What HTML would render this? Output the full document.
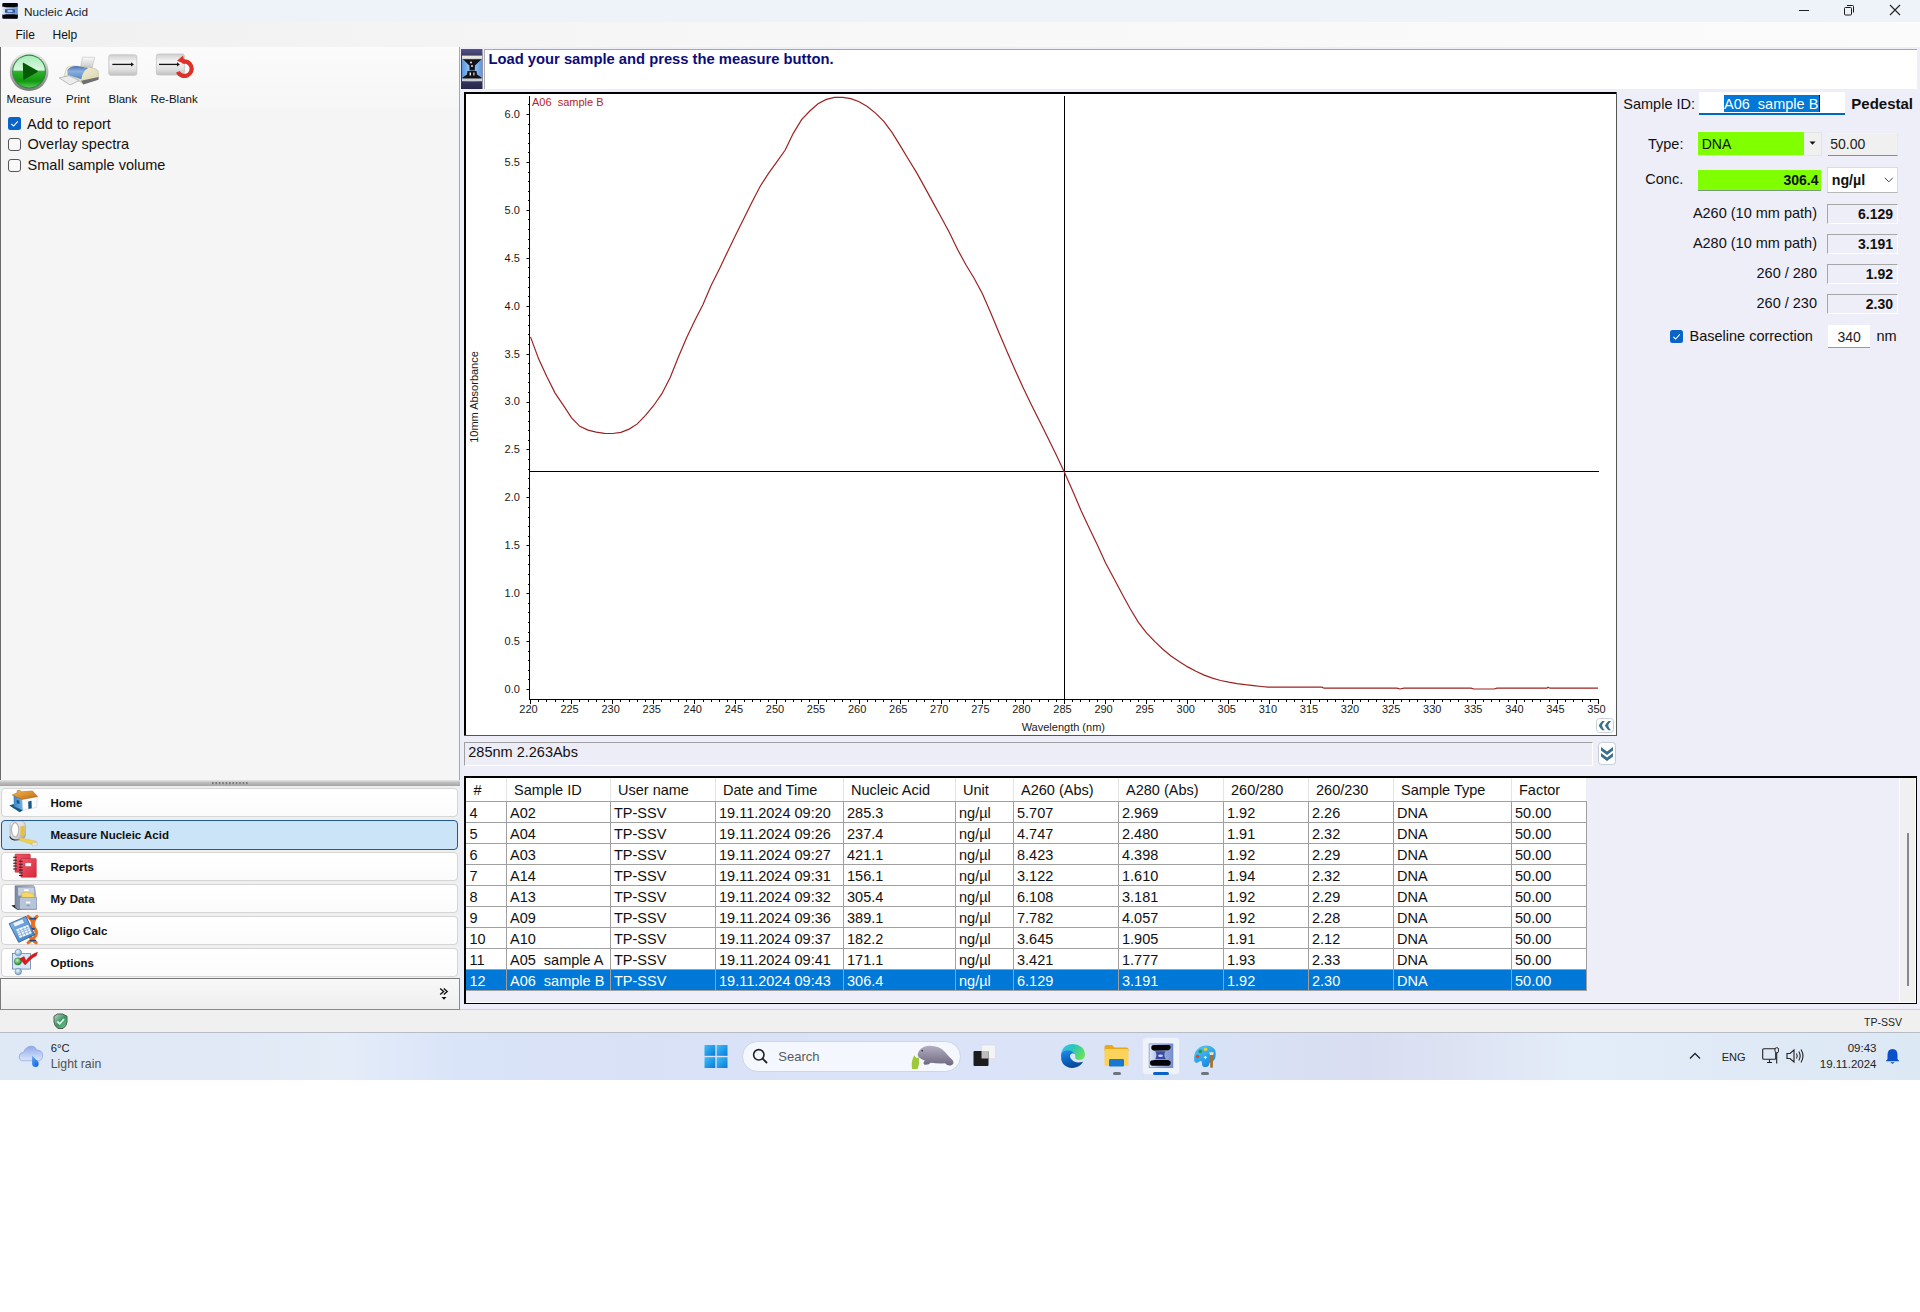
<!DOCTYPE html>
<html><head><meta charset="utf-8"><title>Nucleic Acid</title>
<style>
html,body{margin:0;padding:0;}
body{width:1920px;height:1312px;position:relative;overflow:hidden;background:#fff;font-family:'Liberation Sans',sans-serif;}
.t{position:absolute;line-height:1;white-space:nowrap;}
svg{overflow:visible}
</style></head><body>
<div style="position:absolute;left:0px;top:0px;width:1920px;height:22px;background:#eef2f9"></div>
<svg style="position:absolute;left:2px;top:3px;" width="16" height="16" viewBox="0 0 16 16"><defs><linearGradient id="ti" x1="0" y1="0" x2="1" y2="0"><stop offset="0" stop-color="#dce8f8"/><stop offset="1" stop-color="#6a90c8"/></linearGradient></defs>
<rect x="0.3" y="0" width="15.5" height="15.8" rx="1" fill="url(#ti)"/>
<path d="M0.3 1 Q0.3 0 1.5 0 L14.5 0 Q15.8 0 15.8 1 L15.8 3.8 Q13 3.6 12 4.2 L4 4.2 Q3 3.6 0.3 3.8 Z" fill="#050508"/>
<path d="M0.3 15 Q0.3 15.8 1.5 15.8 L14.5 15.8 Q15.8 15.8 15.8 15 L15.8 11.6 Q13 11.8 12 11.3 L4 11.3 Q3 11.8 0.3 11.6 Z" fill="#050508"/>
<rect x="3" y="6.2" width="10" height="3.6" fill="#2c5aa8"/><rect x="5.5" y="7.1" width="5" height="1.8" fill="#b8d0f0"/></svg>
<div class="t" style="left:24px;top:6.05px;font-size:11.75px;font-weight:normal;color:#1a1a1a;">Nucleic Acid</div>
<div style="position:absolute;left:1799px;top:10px;width:10px;height:1px;background:#222"></div>
<svg style="position:absolute;left:1843px;top:4px;" width="12" height="12" viewBox="0 0 12 12"><rect x="1.5" y="3.5" width="7" height="7.5" rx="1" fill="none" stroke="#1a1a1a" stroke-width="1"/><path d="M4 1.5 H9.5 Q10.5 1.5 10.5 2.5 V8.5" fill="none" stroke="#1a1a1a" stroke-width="1"/></svg>
<svg style="position:absolute;left:1889px;top:4px;" width="12" height="12" viewBox="0 0 12 12"><path d="M1 1 L11 11 M11 1 L1 11" stroke="#222" stroke-width="1.1"/></svg>
<div style="position:absolute;left:0px;top:22px;width:1920px;height:25px;background:linear-gradient(90deg,#f0f0f0 0%,#f7f7f7 40%,#fbfbfb 100%)"></div>
<div class="t" style="left:15.5px;top:28.59px;font-size:12px;font-weight:normal;color:#111;">File</div>
<div class="t" style="left:52.5px;top:28.59px;font-size:12px;font-weight:normal;color:#111;">Help</div>
<div style="position:absolute;left:460px;top:47px;width:1460px;height:962px;background:#eeeef9"></div>
<div style="position:absolute;left:0px;top:47px;width:460px;height:733px;background:#f5f5f5"></div>
<div style="position:absolute;left:0px;top:47px;width:459px;height:61px;background:linear-gradient(180deg,#fbfbfb,#f6f6f6)"></div>
<div style="position:absolute;left:0px;top:47px;width:1px;height:733px;background:#6a6a6a"></div>
<div style="position:absolute;left:459px;top:47px;width:1px;height:733px;background:#a8a8a8"></div>
<svg style="position:absolute;left:5px;top:48px" width="100" height="44" viewBox="0 0 1920 845">
<defs>
<linearGradient id="mring" x1="0" y1="0" x2="0" y2="1"><stop offset="0" stop-color="#f0f0f0"/><stop offset="1" stop-color="#7a7a7a"/></linearGradient>
<linearGradient id="mg" x1="0" y1="0" x2="0" y2="1"><stop offset="0" stop-color="#a8ecb8"/><stop offset="0.45" stop-color="#d8f8e0"/><stop offset="0.5" stop-color="#30b030"/><stop offset="0.8" stop-color="#109810"/><stop offset="1" stop-color="#58c858"/></linearGradient>
<linearGradient id="pblue" x1="0" y1="0" x2="0" y2="1"><stop offset="0" stop-color="#4a6ea8"/><stop offset="0.4" stop-color="#8ab0e0"/><stop offset="1" stop-color="#5a88c0"/></linearGradient>
<linearGradient id="pcream" x1="0" y1="0" x2="1" y2="1"><stop offset="0" stop-color="#fbf8e4"/><stop offset="1" stop-color="#d8d2a8"/></linearGradient>
<linearGradient id="ppaper" x1="0" y1="0" x2="0" y2="1"><stop offset="0" stop-color="#fafafa"/><stop offset="1" stop-color="#c8c8c8"/></linearGradient>
</defs>
<circle cx="462" cy="455" r="372" fill="url(#mring)"/>
<circle cx="462" cy="452" r="325" fill="#2a8a3a"/>
<circle cx="462" cy="452" r="305" fill="url(#mg)"/>
<path d="M355 285 Q340 280 342 300 L352 595 Q355 615 372 605 L625 460 Q642 448 625 438 Z" fill="#055a05"/>
<path d="M1490 175 L1722 180 L1672 385 L1450 372 Z" fill="url(#ppaper)" stroke="#b8b8b8" stroke-width="10"/>
<path d="M1140 510 L1190 380 Q1230 340 1330 345 L1620 370 Q1780 400 1790 450 L1795 590 L1505 690 L1430 640 L1140 540 Z" fill="url(#pcream)" stroke="#a8a488" stroke-width="8"/>
<path d="M1195 430 Q1230 350 1380 345 L1600 385 Q1490 440 1465 600 L1205 520 Z" fill="url(#pblue)"/>
<path d="M1460 630 L1795 555 L1795 610 L1505 700 Z" fill="#707070"/>
<path d="M1040 575 L1230 530 L1425 625 L1250 710 Z" fill="#ececec" stroke="#9a9a9a" stroke-width="12"/>
</svg>
<svg style="position:absolute;left:107px;top:54px;" width="32" height="24" viewBox="0 0 32 24"><defs><linearGradient id="bl" x1="0" y1="0" x2="0" y2="1"><stop offset="0" stop-color="#cfcfcf"/><stop offset="0.35" stop-color="#f4f4f4"/><stop offset="0.7" stop-color="#e2e2e2"/><stop offset="1" stop-color="#c0c0c0"/></linearGradient></defs>
<rect x="1.8" y="0.8" width="28" height="20.5" rx="2" fill="url(#bl)" stroke="#c4c4c4" stroke-width="0.8"/>
<path d="M5.3 10.4 H24.5" stroke="#151515" stroke-width="1.3"/><path d="M24 8.2 L27 10.4 L24 12.6 Z" fill="#151515"/></svg>
<svg style="position:absolute;left:150px;top:50px;" width="50" height="35" viewBox="0 0 50 35"><defs><linearGradient id="bl2" x1="0" y1="0" x2="0" y2="1"><stop offset="0" stop-color="#cfcfcf"/><stop offset="0.35" stop-color="#f4f4f4"/><stop offset="0.7" stop-color="#e2e2e2"/><stop offset="1" stop-color="#c0c0c0"/></linearGradient></defs>
<rect x="6.4" y="4" width="28" height="21" rx="2" fill="url(#bl2)" stroke="#c4c4c4" stroke-width="0.8"/>
<path d="M9 14.4 H27.5" stroke="#151515" stroke-width="1.3"/><path d="M27 12.2 L29.8 14.4 L27 16.6 Z" fill="#151515"/>
<path d="M31.9 11.8 A7.3 7.3 0 1 1 27.8 21.9" fill="none" stroke="#dc3228" stroke-width="4.2"/>
<path d="M27 10.8 L33 5.6 L35 14 Z" fill="#e0302a"/></svg>
<div class="t" style="left:6.6px;top:94.07px;font-size:11.5px;font-weight:normal;color:#111;">Measure</div>
<div class="t" style="left:66px;top:94.07px;font-size:11.5px;font-weight:normal;color:#111;">Print</div>
<div class="t" style="left:108.5px;top:94.07px;font-size:11.5px;font-weight:normal;color:#111;">Blank</div>
<div class="t" style="left:150.4px;top:94.07px;font-size:11.5px;font-weight:normal;color:#111;">Re-Blank</div>
<svg style="position:absolute;left:8px;top:117px;" width="13" height="13" viewBox="0 0 13 13"><rect x="0" y="0" width="13" height="13" rx="2.5" fill="#0a64c8"/><path d="M3.3 6.8 L5.6 9 L9.8 4.4" fill="none" stroke="#fff" stroke-width="1.1"/></svg>
<svg style="position:absolute;left:8px;top:138px;" width="13" height="13" viewBox="0 0 13 13"><rect x="0.5" y="0.5" width="12" height="12" rx="2.5" fill="#f8f8f8" stroke="#555" stroke-width="1"/></svg>
<svg style="position:absolute;left:8px;top:159px;" width="13" height="13" viewBox="0 0 13 13"><rect x="0.5" y="0.5" width="12" height="12" rx="2.5" fill="#f8f8f8" stroke="#555" stroke-width="1"/></svg>
<div class="t" style="left:27px;top:116.53px;font-size:14.5px;font-weight:normal;color:#111;">Add to report</div>
<div class="t" style="left:27.6px;top:136.93px;font-size:14.5px;font-weight:normal;color:#111;">Overlay spectra</div>
<div class="t" style="left:27.6px;top:158.03px;font-size:14.5px;font-weight:normal;color:#111;">Small sample volume</div>
<div style="position:absolute;left:0px;top:780px;width:460px;height:6px;background:linear-gradient(180deg,#e8e8e8 0%,#c0c0c0 40%,#a4a4a4 100%)"></div>
<svg style="position:absolute;left:212px;top:782px;" width="36" height="3" viewBox="0 0 36 3"><rect x="0.0" y="0" width="1.6" height="2.2" fill="#7a7a7a"/><rect x="3.4" y="0" width="1.6" height="2.2" fill="#7a7a7a"/><rect x="6.8" y="0" width="1.6" height="2.2" fill="#7a7a7a"/><rect x="10.2" y="0" width="1.6" height="2.2" fill="#7a7a7a"/><rect x="13.6" y="0" width="1.6" height="2.2" fill="#7a7a7a"/><rect x="17.0" y="0" width="1.6" height="2.2" fill="#7a7a7a"/><rect x="20.4" y="0" width="1.6" height="2.2" fill="#7a7a7a"/><rect x="23.8" y="0" width="1.6" height="2.2" fill="#7a7a7a"/><rect x="27.2" y="0" width="1.6" height="2.2" fill="#7a7a7a"/><rect x="30.6" y="0" width="1.6" height="2.2" fill="#7a7a7a"/><rect x="34.0" y="0" width="1.6" height="2.2" fill="#7a7a7a"/></svg>
<div style="position:absolute;left:0px;top:786px;width:460px;height:192px;background:#efefef"></div>
<div style="position:absolute;left:1px;top:788px;width:455px;height:27px;background:linear-gradient(180deg,#ffffff,#fbfbfb);border:1px solid #d6d6d6;border-radius:4px"></div>
<div class="t" style="left:50.5px;top:798.27px;font-size:11.5px;font-weight:bold;color:#111;">Home</div>
<div style="position:absolute;left:1px;top:819.5px;width:455px;height:28px;background:#cce4f7;border:1px solid #215a92;border-radius:4px"></div>
<div class="t" style="left:50.5px;top:830.27px;font-size:11.5px;font-weight:bold;color:#111;">Measure Nucleic Acid</div>
<div style="position:absolute;left:1px;top:852px;width:455px;height:27px;background:linear-gradient(180deg,#ffffff,#fbfbfb);border:1px solid #d6d6d6;border-radius:4px"></div>
<div class="t" style="left:50.5px;top:862.27px;font-size:11.5px;font-weight:bold;color:#111;">Reports</div>
<div style="position:absolute;left:1px;top:884px;width:455px;height:27px;background:linear-gradient(180deg,#ffffff,#fbfbfb);border:1px solid #d6d6d6;border-radius:4px"></div>
<div class="t" style="left:50.5px;top:894.27px;font-size:11.5px;font-weight:bold;color:#111;">My Data</div>
<div style="position:absolute;left:1px;top:916px;width:455px;height:27px;background:linear-gradient(180deg,#ffffff,#fbfbfb);border:1px solid #d6d6d6;border-radius:4px"></div>
<div class="t" style="left:50.5px;top:926.27px;font-size:11.5px;font-weight:bold;color:#111;">Oligo Calc</div>
<div style="position:absolute;left:1px;top:948px;width:455px;height:27px;background:linear-gradient(180deg,#ffffff,#fbfbfb);border:1px solid #d6d6d6;border-radius:4px"></div>
<div class="t" style="left:50.5px;top:958.27px;font-size:11.5px;font-weight:bold;color:#111;">Options</div>
<div style="position:absolute;left:0px;top:978px;width:460px;height:32px;background:linear-gradient(180deg,#f8f8f8,#efefef);border-top:1px solid #7a7a7a;border-bottom:1px solid #8a8a8a;border-left:1px solid #7a7a7a;border-right:1px solid #8a8a8a;box-sizing:border-box"></div>
<svg style="position:absolute;left:439px;top:987px;" width="12" height="15" viewBox="0 0 12 15"><path d="M1.2 1.5 L4.6 4.5 L1.2 7.5 M4.8 1.5 L8.2 4.5 L4.8 7.5" fill="none" stroke="#111" stroke-width="1.4"/><path d="M2.5 10 L7.5 10 L5 12.8 Z" fill="#111"/></svg>
<div style="position:absolute;left:0px;top:1010px;width:1920px;height:22px;background:#f0f0f0"></div>
<div style="position:absolute;left:460px;top:1009px;width:1460px;height:1px;background:#d0d0d8"></div>
<div style="position:absolute;left:0px;top:1032px;width:1920px;height:1px;background:#b8bcc4"></div>
<svg style="position:absolute;left:52px;top:1013px;" width="17" height="17" viewBox="0 0 17 17"><defs><linearGradient id="sh" x1="0" y1="0" x2="1" y2="1"><stop offset="0" stop-color="#c8d4d0"/><stop offset="0.5" stop-color="#3a9a60"/><stop offset="1" stop-color="#70c890"/></linearGradient></defs>
<path d="M5.5 1 L10.5 1 L15 3.2 L15 9 Q14.5 13 11 15.5 L6 15.5 Q2.5 13 2 9 L2 3.2 Z" fill="url(#sh)" stroke="#505858" stroke-width="1"/>
<path d="M5.3 8.5 L7.8 10.8 L12 6" fill="none" stroke="#d8fce8" stroke-width="1.8"/></svg>
<div class="t" style="right:18px;top:1017.11px;font-size:10.5px;font-weight:normal;color:#222;">TP-SSV</div>
<div style="position:absolute;left:0px;top:1033px;width:1920px;height:47px;background:linear-gradient(90deg,#dfe8f5 0%,#e1e9f6 12%,#e4ecf8 18%,#d9e4f8 24%,#d9e1f6 33%,#dae3f7 45%,#dbe3f7 55%,#d8e2f6 64%,#d9ddf1 71%,#dde3f3 76%,#e3ecf9 82%,#e0eaf7 90%,#dde8f5 100%)"></div>
<svg style="position:absolute;left:461px;top:49px;" width="22" height="40" viewBox="0 0 22 40"><defs><linearGradient id="hi" x1="0" y1="0" x2="0" y2="1"><stop offset="0" stop-color="#54548a"/><stop offset="0.16" stop-color="#3c3c68"/><stop offset="0.8" stop-color="#34345a"/><stop offset="1" stop-color="#26264a"/></linearGradient>
<linearGradient id="hb" x1="0" y1="0" x2="1" y2="0"><stop offset="0" stop-color="#5a98e0"/><stop offset="0.5" stop-color="#a8d0f4"/><stop offset="1" stop-color="#5a98e0"/></linearGradient></defs>
<rect x="0" y="0" width="21.5" height="40" fill="url(#hi)"/>
<rect x="1" y="9.4" width="20" height="23" fill="url(#hb)"/>
<rect x="1" y="6.6" width="20" height="3.2" fill="#ece8d8"/>
<path d="M2 10.2 L20.5 10.2 L14 16.5 L13.8 21.5 L8.6 21.5 L8.4 16.5 Z" fill="#141418"/>
<path d="M6.5 22 L15.5 22 L16 25.5 L20.5 28.5 L20.5 32 L1.5 32 L1.5 28.5 L6 25.5 Z" fill="#141418"/>
<rect x="1" y="29.5" width="20" height="2.5" fill="#e8eef4" opacity="0.85"/>
<circle cx="10" cy="13.5" r="0.9" fill="#fff"/><circle cx="11" cy="17" r="1" fill="#ddd"/>
<rect x="8.6" y="23.5" width="1.4" height="3" fill="#f0f0f0"/><rect x="12.3" y="23.5" width="1.2" height="3" fill="#d8d8d8"/></svg>
<div style="position:absolute;left:484px;top:49px;width:1433px;height:40px;background:#fff;border-top:1px solid #a8a8a8;border-left:1px solid #b0b0b0;box-sizing:border-box"></div>
<div class="t" style="left:488.5px;top:51.91px;font-size:14.75px;font-weight:bold;color:#0c0c78;">Load your sample and press the measure button.</div>
<div style="position:absolute;left:464px;top:92px;width:1153px;height:644px;background:#fff"></div>
<div style="position:absolute;left:464px;top:92px;width:1153px;height:2px;background:#000"></div>
<div style="position:absolute;left:464px;top:92px;width:2px;height:644px;background:#000"></div>
<div style="position:absolute;left:464px;top:735px;width:1153px;height:1px;background:#555"></div>
<div style="position:absolute;left:1616px;top:92px;width:1px;height:644px;background:#555"></div>
<svg style="position:absolute;left:464px;top:92px;overflow:hidden" width="1153" height="644" viewBox="0 0 1153 644"><g transform="translate(-464,-92)"><rect x="529" y="96" width="1" height="604" fill="#000"/><rect x="529" y="699" width="1070" height="1" fill="#000"/><rect x="526.5" y="689" width="2.5" height="1" fill="#000"/><rect x="528" y="679" width="1" height="1" fill="#000"/><rect x="528" y="670" width="1" height="1" fill="#000"/><rect x="528" y="660" width="1" height="1" fill="#000"/><rect x="528" y="651" width="1" height="1" fill="#000"/><rect x="526.5" y="641" width="2.5" height="1" fill="#000"/><rect x="528" y="632" width="1" height="1" fill="#000"/><rect x="528" y="622" width="1" height="1" fill="#000"/><rect x="528" y="612" width="1" height="1" fill="#000"/><rect x="528" y="603" width="1" height="1" fill="#000"/><rect x="526.5" y="593" width="2.5" height="1" fill="#000"/><rect x="528" y="584" width="1" height="1" fill="#000"/><rect x="528" y="574" width="1" height="1" fill="#000"/><rect x="528" y="564" width="1" height="1" fill="#000"/><rect x="528" y="555" width="1" height="1" fill="#000"/><rect x="526.5" y="545" width="2.5" height="1" fill="#000"/><rect x="528" y="536" width="1" height="1" fill="#000"/><rect x="528" y="526" width="1" height="1" fill="#000"/><rect x="528" y="517" width="1" height="1" fill="#000"/><rect x="528" y="507" width="1" height="1" fill="#000"/><rect x="526.5" y="497" width="2.5" height="1" fill="#000"/><rect x="528" y="488" width="1" height="1" fill="#000"/><rect x="528" y="478" width="1" height="1" fill="#000"/><rect x="528" y="469" width="1" height="1" fill="#000"/><rect x="528" y="459" width="1" height="1" fill="#000"/><rect x="526.5" y="449" width="2.5" height="1" fill="#000"/><rect x="528" y="440" width="1" height="1" fill="#000"/><rect x="528" y="430" width="1" height="1" fill="#000"/><rect x="528" y="421" width="1" height="1" fill="#000"/><rect x="528" y="411" width="1" height="1" fill="#000"/><rect x="526.5" y="402" width="2.5" height="1" fill="#000"/><rect x="528" y="392" width="1" height="1" fill="#000"/><rect x="528" y="382" width="1" height="1" fill="#000"/><rect x="528" y="373" width="1" height="1" fill="#000"/><rect x="528" y="363" width="1" height="1" fill="#000"/><rect x="526.5" y="354" width="2.5" height="1" fill="#000"/><rect x="528" y="344" width="1" height="1" fill="#000"/><rect x="528" y="334" width="1" height="1" fill="#000"/><rect x="528" y="325" width="1" height="1" fill="#000"/><rect x="528" y="315" width="1" height="1" fill="#000"/><rect x="526.5" y="306" width="2.5" height="1" fill="#000"/><rect x="528" y="296" width="1" height="1" fill="#000"/><rect x="528" y="287" width="1" height="1" fill="#000"/><rect x="528" y="277" width="1" height="1" fill="#000"/><rect x="528" y="267" width="1" height="1" fill="#000"/><rect x="526.5" y="258" width="2.5" height="1" fill="#000"/><rect x="528" y="248" width="1" height="1" fill="#000"/><rect x="528" y="239" width="1" height="1" fill="#000"/><rect x="528" y="229" width="1" height="1" fill="#000"/><rect x="528" y="219" width="1" height="1" fill="#000"/><rect x="526.5" y="210" width="2.5" height="1" fill="#000"/><rect x="528" y="200" width="1" height="1" fill="#000"/><rect x="528" y="191" width="1" height="1" fill="#000"/><rect x="528" y="181" width="1" height="1" fill="#000"/><rect x="528" y="172" width="1" height="1" fill="#000"/><rect x="526.5" y="162" width="2.5" height="1" fill="#000"/><rect x="528" y="152" width="1" height="1" fill="#000"/><rect x="528" y="143" width="1" height="1" fill="#000"/><rect x="528" y="133" width="1" height="1" fill="#000"/><rect x="528" y="124" width="1" height="1" fill="#000"/><rect x="526.5" y="114" width="2.5" height="1" fill="#000"/><rect x="528" y="104" width="1" height="1" fill="#000"/><rect x="530" y="700" width="1" height="4" fill="#000"/><rect x="538" y="700" width="1" height="2" fill="#000"/><rect x="546" y="700" width="1" height="2" fill="#000"/><rect x="555" y="700" width="1" height="2" fill="#000"/><rect x="563" y="700" width="1" height="2" fill="#000"/><rect x="571" y="700" width="1" height="4" fill="#000"/><rect x="579" y="700" width="1" height="2" fill="#000"/><rect x="588" y="700" width="1" height="2" fill="#000"/><rect x="596" y="700" width="1" height="2" fill="#000"/><rect x="604" y="700" width="1" height="2" fill="#000"/><rect x="612" y="700" width="1" height="4" fill="#000"/><rect x="620" y="700" width="1" height="2" fill="#000"/><rect x="629" y="700" width="1" height="2" fill="#000"/><rect x="637" y="700" width="1" height="2" fill="#000"/><rect x="645" y="700" width="1" height="2" fill="#000"/><rect x="653" y="700" width="1" height="4" fill="#000"/><rect x="661" y="700" width="1" height="2" fill="#000"/><rect x="670" y="700" width="1" height="2" fill="#000"/><rect x="678" y="700" width="1" height="2" fill="#000"/><rect x="686" y="700" width="1" height="2" fill="#000"/><rect x="694" y="700" width="1" height="4" fill="#000"/><rect x="703" y="700" width="1" height="2" fill="#000"/><rect x="711" y="700" width="1" height="2" fill="#000"/><rect x="719" y="700" width="1" height="2" fill="#000"/><rect x="727" y="700" width="1" height="2" fill="#000"/><rect x="735" y="700" width="1" height="4" fill="#000"/><rect x="744" y="700" width="1" height="2" fill="#000"/><rect x="752" y="700" width="1" height="2" fill="#000"/><rect x="760" y="700" width="1" height="2" fill="#000"/><rect x="768" y="700" width="1" height="2" fill="#000"/><rect x="776" y="700" width="1" height="4" fill="#000"/><rect x="785" y="700" width="1" height="2" fill="#000"/><rect x="793" y="700" width="1" height="2" fill="#000"/><rect x="801" y="700" width="1" height="2" fill="#000"/><rect x="809" y="700" width="1" height="2" fill="#000"/><rect x="818" y="700" width="1" height="4" fill="#000"/><rect x="826" y="700" width="1" height="2" fill="#000"/><rect x="834" y="700" width="1" height="2" fill="#000"/><rect x="842" y="700" width="1" height="2" fill="#000"/><rect x="850" y="700" width="1" height="2" fill="#000"/><rect x="859" y="700" width="1" height="4" fill="#000"/><rect x="867" y="700" width="1" height="2" fill="#000"/><rect x="875" y="700" width="1" height="2" fill="#000"/><rect x="883" y="700" width="1" height="2" fill="#000"/><rect x="891" y="700" width="1" height="2" fill="#000"/><rect x="900" y="700" width="1" height="4" fill="#000"/><rect x="908" y="700" width="1" height="2" fill="#000"/><rect x="916" y="700" width="1" height="2" fill="#000"/><rect x="924" y="700" width="1" height="2" fill="#000"/><rect x="933" y="700" width="1" height="2" fill="#000"/><rect x="941" y="700" width="1" height="4" fill="#000"/><rect x="949" y="700" width="1" height="2" fill="#000"/><rect x="957" y="700" width="1" height="2" fill="#000"/><rect x="965" y="700" width="1" height="2" fill="#000"/><rect x="974" y="700" width="1" height="2" fill="#000"/><rect x="982" y="700" width="1" height="4" fill="#000"/><rect x="990" y="700" width="1" height="2" fill="#000"/><rect x="998" y="700" width="1" height="2" fill="#000"/><rect x="1006" y="700" width="1" height="2" fill="#000"/><rect x="1015" y="700" width="1" height="2" fill="#000"/><rect x="1023" y="700" width="1" height="4" fill="#000"/><rect x="1031" y="700" width="1" height="2" fill="#000"/><rect x="1039" y="700" width="1" height="2" fill="#000"/><rect x="1048" y="700" width="1" height="2" fill="#000"/><rect x="1056" y="700" width="1" height="2" fill="#000"/><rect x="1064" y="700" width="1" height="4" fill="#000"/><rect x="1072" y="700" width="1" height="2" fill="#000"/><rect x="1080" y="700" width="1" height="2" fill="#000"/><rect x="1089" y="700" width="1" height="2" fill="#000"/><rect x="1097" y="700" width="1" height="2" fill="#000"/><rect x="1105" y="700" width="1" height="4" fill="#000"/><rect x="1113" y="700" width="1" height="2" fill="#000"/><rect x="1122" y="700" width="1" height="2" fill="#000"/><rect x="1130" y="700" width="1" height="2" fill="#000"/><rect x="1138" y="700" width="1" height="2" fill="#000"/><rect x="1146" y="700" width="1" height="4" fill="#000"/><rect x="1154" y="700" width="1" height="2" fill="#000"/><rect x="1163" y="700" width="1" height="2" fill="#000"/><rect x="1171" y="700" width="1" height="2" fill="#000"/><rect x="1179" y="700" width="1" height="2" fill="#000"/><rect x="1187" y="700" width="1" height="4" fill="#000"/><rect x="1195" y="700" width="1" height="2" fill="#000"/><rect x="1204" y="700" width="1" height="2" fill="#000"/><rect x="1212" y="700" width="1" height="2" fill="#000"/><rect x="1220" y="700" width="1" height="2" fill="#000"/><rect x="1228" y="700" width="1" height="4" fill="#000"/><rect x="1237" y="700" width="1" height="2" fill="#000"/><rect x="1245" y="700" width="1" height="2" fill="#000"/><rect x="1253" y="700" width="1" height="2" fill="#000"/><rect x="1261" y="700" width="1" height="2" fill="#000"/><rect x="1269" y="700" width="1" height="4" fill="#000"/><rect x="1278" y="700" width="1" height="2" fill="#000"/><rect x="1286" y="700" width="1" height="2" fill="#000"/><rect x="1294" y="700" width="1" height="2" fill="#000"/><rect x="1302" y="700" width="1" height="2" fill="#000"/><rect x="1310" y="700" width="1" height="4" fill="#000"/><rect x="1319" y="700" width="1" height="2" fill="#000"/><rect x="1327" y="700" width="1" height="2" fill="#000"/><rect x="1335" y="700" width="1" height="2" fill="#000"/><rect x="1343" y="700" width="1" height="2" fill="#000"/><rect x="1352" y="700" width="1" height="4" fill="#000"/><rect x="1360" y="700" width="1" height="2" fill="#000"/><rect x="1368" y="700" width="1" height="2" fill="#000"/><rect x="1376" y="700" width="1" height="2" fill="#000"/><rect x="1384" y="700" width="1" height="2" fill="#000"/><rect x="1393" y="700" width="1" height="4" fill="#000"/><rect x="1401" y="700" width="1" height="2" fill="#000"/><rect x="1409" y="700" width="1" height="2" fill="#000"/><rect x="1417" y="700" width="1" height="2" fill="#000"/><rect x="1425" y="700" width="1" height="2" fill="#000"/><rect x="1434" y="700" width="1" height="4" fill="#000"/><rect x="1442" y="700" width="1" height="2" fill="#000"/><rect x="1450" y="700" width="1" height="2" fill="#000"/><rect x="1458" y="700" width="1" height="2" fill="#000"/><rect x="1467" y="700" width="1" height="2" fill="#000"/><rect x="1475" y="700" width="1" height="4" fill="#000"/><rect x="1483" y="700" width="1" height="2" fill="#000"/><rect x="1491" y="700" width="1" height="2" fill="#000"/><rect x="1499" y="700" width="1" height="2" fill="#000"/><rect x="1508" y="700" width="1" height="2" fill="#000"/><rect x="1516" y="700" width="1" height="4" fill="#000"/><rect x="1524" y="700" width="1" height="2" fill="#000"/><rect x="1532" y="700" width="1" height="2" fill="#000"/><rect x="1540" y="700" width="1" height="2" fill="#000"/><rect x="1549" y="700" width="1" height="2" fill="#000"/><rect x="1557" y="700" width="1" height="4" fill="#000"/><rect x="1565" y="700" width="1" height="2" fill="#000"/><rect x="1573" y="700" width="1" height="2" fill="#000"/><rect x="1582" y="700" width="1" height="2" fill="#000"/><rect x="1590" y="700" width="1" height="2" fill="#000"/><rect x="1598" y="700" width="1" height="4" fill="#000"/><rect x="1064" y="96" width="1" height="603" fill="#000"/><rect x="530" y="471" width="1069" height="1" fill="#000"/><polyline fill="none" stroke="#9c2222" stroke-width="1.2" points="530.5,336.9 538.7,359.1 546.9,376.7 555.1,393.1 563.4,405.3 571.6,417.8 579.8,426.3 588.0,430.1 596.2,432.2 604.4,433.3 612.7,433.5 620.9,432.4 629.1,429.1 637.3,423.9 645.5,415.3 653.7,405.5 661.9,393.7 670.2,377.4 678.4,357.0 686.6,337.7 694.8,320.6 703.0,304.4 711.2,285.3 719.5,268.8 727.7,251.4 735.9,234.4 744.1,218.0 752.3,201.6 760.5,185.7 768.7,173.1 777.0,161.6 785.2,150.0 793.4,133.1 801.6,119.7 809.8,111.0 818.0,103.8 826.3,99.4 834.5,97.4 842.7,97.4 850.9,98.7 859.1,101.7 867.3,106.6 875.5,113.1 883.8,121.4 892.0,132.4 900.2,145.6 908.4,159.3 916.6,172.6 924.8,187.4 933.1,202.6 941.3,217.5 949.5,232.8 957.7,249.7 965.9,264.8 974.1,278.2 982.3,293.4 990.6,312.4 998.8,332.2 1007.0,351.6 1015.2,370.3 1023.4,388.2 1031.6,405.3 1039.9,421.8 1048.1,438.3 1056.3,455.1 1064.5,472.4 1072.7,490.9 1080.9,510.2 1089.1,527.8 1097.4,545.0 1105.6,563.1 1113.8,578.3 1122.0,593.8 1130.2,608.7 1138.4,622.3 1146.7,633.1 1154.9,641.7 1163.1,649.5 1171.3,656.2 1179.5,661.8 1187.7,666.9 1195.9,671.3 1204.2,675.1 1212.4,678.1 1220.6,680.5 1228.8,682.2 1237.0,683.6 1245.2,684.7 1253.5,685.6 1261.7,686.5 1267.8,687.2 1322.0,687.2 1324.0,688.2 1397.0,688.2 1400.0,689.0 1404.0,688.2 1471.0,688.2 1474.0,689.0 1494.0,689.0 1497.0,688.2 1547.0,688.2 1548.0,687.3 1550.0,688.2 1598.0,688.2"/></g></svg>
<div class="t" style="right:1400.2px;top:683.99px;font-size:11px;font-weight:normal;color:#1a1a1a;">0.0</div>
<div class="t" style="right:1400.2px;top:636.07px;font-size:11px;font-weight:normal;color:#1a1a1a;">0.5</div>
<div class="t" style="right:1400.2px;top:588.16px;font-size:11px;font-weight:normal;color:#1a1a1a;">1.0</div>
<div class="t" style="right:1400.2px;top:540.24px;font-size:11px;font-weight:normal;color:#1a1a1a;">1.5</div>
<div class="t" style="right:1400.2px;top:492.32px;font-size:11px;font-weight:normal;color:#1a1a1a;">2.0</div>
<div class="t" style="right:1400.2px;top:444.41px;font-size:11px;font-weight:normal;color:#1a1a1a;">2.5</div>
<div class="t" style="right:1400.2px;top:396.49px;font-size:11px;font-weight:normal;color:#1a1a1a;">3.0</div>
<div class="t" style="right:1400.2px;top:348.57px;font-size:11px;font-weight:normal;color:#1a1a1a;">3.5</div>
<div class="t" style="right:1400.2px;top:300.66px;font-size:11px;font-weight:normal;color:#1a1a1a;">4.0</div>
<div class="t" style="right:1400.2px;top:252.74px;font-size:11px;font-weight:normal;color:#1a1a1a;">4.5</div>
<div class="t" style="right:1400.2px;top:204.82px;font-size:11px;font-weight:normal;color:#1a1a1a;">5.0</div>
<div class="t" style="right:1400.2px;top:156.91px;font-size:11px;font-weight:normal;color:#1a1a1a;">5.5</div>
<div class="t" style="right:1400.2px;top:108.99px;font-size:11px;font-weight:normal;color:#1a1a1a;">6.0</div>
<div class="t" style="left:528.5px;transform:translateX(-50%);top:704.49px;font-size:11px;font-weight:normal;color:#1a1a1a;">220</div>
<div class="t" style="left:569.577px;transform:translateX(-50%);top:704.49px;font-size:11px;font-weight:normal;color:#1a1a1a;">225</div>
<div class="t" style="left:610.654px;transform:translateX(-50%);top:704.49px;font-size:11px;font-weight:normal;color:#1a1a1a;">230</div>
<div class="t" style="left:651.731px;transform:translateX(-50%);top:704.49px;font-size:11px;font-weight:normal;color:#1a1a1a;">235</div>
<div class="t" style="left:692.808px;transform:translateX(-50%);top:704.49px;font-size:11px;font-weight:normal;color:#1a1a1a;">240</div>
<div class="t" style="left:733.885px;transform:translateX(-50%);top:704.49px;font-size:11px;font-weight:normal;color:#1a1a1a;">245</div>
<div class="t" style="left:774.962px;transform:translateX(-50%);top:704.49px;font-size:11px;font-weight:normal;color:#1a1a1a;">250</div>
<div class="t" style="left:816.039px;transform:translateX(-50%);top:704.49px;font-size:11px;font-weight:normal;color:#1a1a1a;">255</div>
<div class="t" style="left:857.116px;transform:translateX(-50%);top:704.49px;font-size:11px;font-weight:normal;color:#1a1a1a;">260</div>
<div class="t" style="left:898.193px;transform:translateX(-50%);top:704.49px;font-size:11px;font-weight:normal;color:#1a1a1a;">265</div>
<div class="t" style="left:939.27px;transform:translateX(-50%);top:704.49px;font-size:11px;font-weight:normal;color:#1a1a1a;">270</div>
<div class="t" style="left:980.347px;transform:translateX(-50%);top:704.49px;font-size:11px;font-weight:normal;color:#1a1a1a;">275</div>
<div class="t" style="left:1021.424px;transform:translateX(-50%);top:704.49px;font-size:11px;font-weight:normal;color:#1a1a1a;">280</div>
<div class="t" style="left:1062.5010000000002px;transform:translateX(-50%);top:704.49px;font-size:11px;font-weight:normal;color:#1a1a1a;">285</div>
<div class="t" style="left:1103.578px;transform:translateX(-50%);top:704.49px;font-size:11px;font-weight:normal;color:#1a1a1a;">290</div>
<div class="t" style="left:1144.6550000000002px;transform:translateX(-50%);top:704.49px;font-size:11px;font-weight:normal;color:#1a1a1a;">295</div>
<div class="t" style="left:1185.732px;transform:translateX(-50%);top:704.49px;font-size:11px;font-weight:normal;color:#1a1a1a;">300</div>
<div class="t" style="left:1226.8090000000002px;transform:translateX(-50%);top:704.49px;font-size:11px;font-weight:normal;color:#1a1a1a;">305</div>
<div class="t" style="left:1267.886px;transform:translateX(-50%);top:704.49px;font-size:11px;font-weight:normal;color:#1a1a1a;">310</div>
<div class="t" style="left:1308.9630000000002px;transform:translateX(-50%);top:704.49px;font-size:11px;font-weight:normal;color:#1a1a1a;">315</div>
<div class="t" style="left:1350.04px;transform:translateX(-50%);top:704.49px;font-size:11px;font-weight:normal;color:#1a1a1a;">320</div>
<div class="t" style="left:1391.1170000000002px;transform:translateX(-50%);top:704.49px;font-size:11px;font-weight:normal;color:#1a1a1a;">325</div>
<div class="t" style="left:1432.194px;transform:translateX(-50%);top:704.49px;font-size:11px;font-weight:normal;color:#1a1a1a;">330</div>
<div class="t" style="left:1473.2710000000002px;transform:translateX(-50%);top:704.49px;font-size:11px;font-weight:normal;color:#1a1a1a;">335</div>
<div class="t" style="left:1514.348px;transform:translateX(-50%);top:704.49px;font-size:11px;font-weight:normal;color:#1a1a1a;">340</div>
<div class="t" style="left:1555.4250000000002px;transform:translateX(-50%);top:704.49px;font-size:11px;font-weight:normal;color:#1a1a1a;">345</div>
<div class="t" style="left:1596.5020000000002px;transform:translateX(-50%);top:704.49px;font-size:11px;font-weight:normal;color:#1a1a1a;">350</div>
<div class="t" style="left:1063.3px;transform:translateX(-50%);top:721.69px;font-size:11px;font-weight:normal;color:#1a1a1a;">Wavelength (nm)</div>
<div class="t" style="left:473.5px;top:397px;font-size:11px;color:#1a1a1a;transform:translate(-50%,-50%) rotate(-90deg);">10mm Absorbance</div>
<div class="t" style="left:532px;top:97.39px;font-size:11px;font-weight:normal;color:#b82424;">A06&nbsp; sample B</div>
<svg style="position:absolute;left:1596px;top:718px;" width="18" height="15" viewBox="0 0 18 15"><rect x="0.5" y="0.5" width="17" height="14" rx="3" fill="#fbfdff" stroke="#cdd0d8"/>
<path d="M8.8 2.9 H6.2 Q3.6 5.4 2.7 7.6 Q3.6 9.8 6.2 12.3 H8.8 Q6.3 9.6 6.0 7.6 Q6.3 5.6 8.8 2.9 Z M15 2.9 H12.4 Q9.8 5.4 8.9 7.6 Q9.8 9.8 12.4 12.3 H15 Q12.5 9.6 12.2 7.6 Q12.5 5.6 15 2.9 Z" fill="#3f6e88"/></svg>
<div style="position:absolute;left:464px;top:742px;width:1129px;height:24px;background:#ededf8;border-top:1px solid #a0a0a0;border-left:1px solid #a0a0a0;border-bottom:1px solid #fff;border-right:1px solid #fff;box-sizing:border-box"></div>
<div class="t" style="left:468.3px;top:744.73px;font-size:14.5px;font-weight:normal;color:#111;">285nm 2.263Abs</div>
<svg style="position:absolute;left:1598px;top:742px;" width="18" height="23" viewBox="0 0 18 23"><rect x="0.5" y="0.5" width="17" height="22" rx="3" fill="#fbfdff" stroke="#c8ccd4"/>
<path d="M3 5 L9 9.5 L15 5 L15 8.5 L9 13 L3 8.5 Z M3 11 L9 15.5 L15 11 L15 14.5 L9 19 L3 14.5 Z" fill="#3a6e8a"/></svg>
<div class="t" style="left:1623.3px;top:96.93px;font-size:14.5px;font-weight:normal;color:#111;">Sample ID:</div>
<div style="position:absolute;left:1699px;top:92px;width:146px;height:23px;background:#fff"></div>
<div style="position:absolute;left:1699px;top:113px;width:146px;height:2px;background:#0067c0"></div>
<div style="position:absolute;left:1724px;top:95px;width:96px;height:17px;background:#0078d7"></div>
<div class="t" style="left:1724px;top:96.93px;font-size:14.5px;font-weight:normal;color:#fff;">A06&nbsp; sample B</div>
<div style="position:absolute;left:1819px;top:95px;width:1px;height:17px;background:#111"></div>
<div class="t" style="left:1851.3px;top:96.30px;font-size:15px;font-weight:bold;color:#111;">Pedestal</div>
<div class="t" style="left:1648px;top:136.93px;font-size:14.5px;font-weight:normal;color:#111;">Type:</div>
<div style="position:absolute;left:1697.5px;top:131.5px;width:124px;height:24px;background:#f0f0f0;border:1px solid #e4e4e4;box-sizing:border-box"></div>
<div style="position:absolute;left:1698px;top:132px;width:106px;height:23px;background:#80ff00"></div>
<svg style="position:absolute;left:1809px;top:141px;" width="8" height="5" viewBox="0 0 8 5"><path d="M0.5 0.5 L6.5 0.5 L3.5 3.8 Z" fill="#111"/></svg>
<div class="t" style="left:1701.7px;top:137.05px;font-size:14px;font-weight:normal;color:#111;">DNA</div>
<div style="position:absolute;left:1828px;top:133px;width:70px;height:23px;background:#f0f0f0;border-bottom:1px solid #8a8a8a;border-right:1px solid #e8e8e8;border-top:1px solid #f4f4f4;box-sizing:border-box"></div>
<div class="t" style="left:1830.3px;top:137.15px;font-size:14px;font-weight:normal;color:#222;">50.00</div>
<div class="t" style="left:1645.3px;top:171.93px;font-size:14.5px;font-weight:normal;color:#111;">Conc.</div>
<div style="position:absolute;left:1698px;top:170px;width:123px;height:21px;background:#80ff00;border-bottom:1px solid #7a9a7a;box-sizing:border-box"></div>
<div class="t" style="right:101.5px;top:172.65px;font-size:14px;font-weight:bold;color:#111;">306.4</div>
<div style="position:absolute;left:1827px;top:167px;width:71px;height:26px;background:#fff;border:1px solid #dcdcdc;border-bottom:1px solid #b8b8b8;box-sizing:border-box"></div>
<div class="t" style="left:1831.7px;top:172.94px;font-size:14.25px;font-weight:bold;color:#111;">ng/µl</div>
<svg style="position:absolute;left:1884px;top:177px;" width="10" height="6" viewBox="0 0 10 6"><path d="M0.8 0.8 L4.8 4.8 L8.8 0.8" fill="none" stroke="#444" stroke-width="1"/></svg>
<div class="t" style="right:103px;top:205.83px;font-size:14.5px;font-weight:normal;color:#111;">A260 (10 mm path)</div>
<div style="position:absolute;left:1827px;top:203.5px;width:71px;height:20px;border-top:1px solid #a6a6a6;border-left:1px solid #a6a6a6;border-bottom:1px solid #fff;border-right:1px solid #fff;box-sizing:border-box"></div>
<div class="t" style="right:27px;top:206.65px;font-size:14px;font-weight:bold;color:#111;">6.129</div>
<div class="t" style="right:103px;top:235.83px;font-size:14.5px;font-weight:normal;color:#111;">A280 (10 mm path)</div>
<div style="position:absolute;left:1827px;top:233.5px;width:71px;height:20px;border-top:1px solid #a6a6a6;border-left:1px solid #a6a6a6;border-bottom:1px solid #fff;border-right:1px solid #fff;box-sizing:border-box"></div>
<div class="t" style="right:27px;top:236.65px;font-size:14px;font-weight:bold;color:#111;">3.191</div>
<div class="t" style="right:103px;top:265.83px;font-size:14.5px;font-weight:normal;color:#111;">260 / 280</div>
<div style="position:absolute;left:1827px;top:263.5px;width:71px;height:20px;border-top:1px solid #a6a6a6;border-left:1px solid #a6a6a6;border-bottom:1px solid #fff;border-right:1px solid #fff;box-sizing:border-box"></div>
<div class="t" style="right:27px;top:266.65px;font-size:14px;font-weight:bold;color:#111;">1.92</div>
<div class="t" style="right:103px;top:295.83px;font-size:14.5px;font-weight:normal;color:#111;">260 / 230</div>
<div style="position:absolute;left:1827px;top:293.5px;width:71px;height:20px;border-top:1px solid #a6a6a6;border-left:1px solid #a6a6a6;border-bottom:1px solid #fff;border-right:1px solid #fff;box-sizing:border-box"></div>
<div class="t" style="right:27px;top:296.65px;font-size:14px;font-weight:bold;color:#111;">2.30</div>
<svg style="position:absolute;left:1670px;top:330px;" width="13" height="13" viewBox="0 0 13 13"><rect x="0" y="0" width="13" height="13" rx="2.5" fill="#0a64c8"/><path d="M3.3 6.8 L5.6 9 L9.8 4.4" fill="none" stroke="#fff" stroke-width="1.1"/></svg>
<div class="t" style="left:1689.5px;top:329.23px;font-size:14.5px;font-weight:normal;color:#111;">Baseline correction</div>
<div style="position:absolute;left:1828px;top:325px;width:42px;height:23px;background:#fff;border-bottom:1px solid #9a9a9a;box-sizing:border-box"></div>
<div class="t" style="left:1837.4px;top:329.65px;font-size:14px;font-weight:normal;color:#222;">340</div>
<div class="t" style="left:1876.4px;top:329.23px;font-size:14.5px;font-weight:normal;color:#111;">nm</div>
<div style="position:absolute;left:464px;top:776px;width:1453px;height:228px;background:#eeeef9;border-top:2px solid #000;border-left:2px solid #000;border-right:1px solid #000;border-bottom:1px solid #000;box-sizing:border-box"></div>
<div style="position:absolute;left:466px;top:1002px;width:1450px;height:1px;background:#fff"></div>
<div style="position:absolute;left:1915px;top:778px;width:1px;height:225px;background:#fff"></div>
<div style="position:absolute;left:466px;top:778px;width:1120px;height:23px;background:#fff"></div>
<div style="position:absolute;left:506px;top:778px;width:1px;height:23px;background:#e4e4e4"></div>
<div style="position:absolute;left:610px;top:778px;width:1px;height:23px;background:#e4e4e4"></div>
<div style="position:absolute;left:715px;top:778px;width:1px;height:23px;background:#e4e4e4"></div>
<div style="position:absolute;left:843px;top:778px;width:1px;height:23px;background:#e4e4e4"></div>
<div style="position:absolute;left:955px;top:778px;width:1px;height:23px;background:#e4e4e4"></div>
<div style="position:absolute;left:1013px;top:778px;width:1px;height:23px;background:#e4e4e4"></div>
<div style="position:absolute;left:1118px;top:778px;width:1px;height:23px;background:#e4e4e4"></div>
<div style="position:absolute;left:1223px;top:778px;width:1px;height:23px;background:#e4e4e4"></div>
<div style="position:absolute;left:1308px;top:778px;width:1px;height:23px;background:#e4e4e4"></div>
<div style="position:absolute;left:1393px;top:778px;width:1px;height:23px;background:#e4e4e4"></div>
<div style="position:absolute;left:1511px;top:778px;width:1px;height:23px;background:#e4e4e4"></div>
<div class="t" style="left:473.5px;top:782.93px;font-size:14.5px;font-weight:normal;color:#111;">#</div>
<div class="t" style="left:514px;top:782.93px;font-size:14.5px;font-weight:normal;color:#111;">Sample ID</div>
<div class="t" style="left:618px;top:782.93px;font-size:14.5px;font-weight:normal;color:#111;">User name</div>
<div class="t" style="left:723px;top:782.93px;font-size:14.5px;font-weight:normal;color:#111;">Date and Time</div>
<div class="t" style="left:851px;top:782.93px;font-size:14.5px;font-weight:normal;color:#111;">Nucleic Acid</div>
<div class="t" style="left:963px;top:782.93px;font-size:14.5px;font-weight:normal;color:#111;">Unit</div>
<div class="t" style="left:1021px;top:782.93px;font-size:14.5px;font-weight:normal;color:#111;">A260 (Abs)</div>
<div class="t" style="left:1126px;top:782.93px;font-size:14.5px;font-weight:normal;color:#111;">A280 (Abs)</div>
<div class="t" style="left:1231px;top:782.93px;font-size:14.5px;font-weight:normal;color:#111;">260/280</div>
<div class="t" style="left:1316px;top:782.93px;font-size:14.5px;font-weight:normal;color:#111;">260/230</div>
<div class="t" style="left:1401px;top:782.93px;font-size:14.5px;font-weight:normal;color:#111;">Sample Type</div>
<div class="t" style="left:1519px;top:782.93px;font-size:14.5px;font-weight:normal;color:#111;">Factor</div>
<div style="position:absolute;left:466px;top:801px;width:1121px;height:189px;background:#fff"></div>
<div class="t" style="left:469.5px;top:805.53px;font-size:14.5px;font-weight:normal;color:#111;">4</div>
<div class="t" style="left:510px;top:805.53px;font-size:14.5px;font-weight:normal;color:#111;">A02</div>
<div class="t" style="left:614px;top:805.53px;font-size:14.5px;font-weight:normal;color:#111;">TP-SSV</div>
<div class="t" style="left:719px;top:805.53px;font-size:14.5px;font-weight:normal;color:#111;">19.11.2024 09:20</div>
<div class="t" style="left:847px;top:805.53px;font-size:14.5px;font-weight:normal;color:#111;">285.3</div>
<div class="t" style="left:959px;top:805.53px;font-size:14.5px;font-weight:normal;color:#111;">ng/µl</div>
<div class="t" style="left:1017px;top:805.53px;font-size:14.5px;font-weight:normal;color:#111;">5.707</div>
<div class="t" style="left:1122px;top:805.53px;font-size:14.5px;font-weight:normal;color:#111;">2.969</div>
<div class="t" style="left:1227px;top:805.53px;font-size:14.5px;font-weight:normal;color:#111;">1.92</div>
<div class="t" style="left:1312px;top:805.53px;font-size:14.5px;font-weight:normal;color:#111;">2.26</div>
<div class="t" style="left:1397px;top:805.53px;font-size:14.5px;font-weight:normal;color:#111;">DNA</div>
<div class="t" style="left:1515px;top:805.53px;font-size:14.5px;font-weight:normal;color:#111;">50.00</div>
<div class="t" style="left:469.5px;top:826.53px;font-size:14.5px;font-weight:normal;color:#111;">5</div>
<div class="t" style="left:510px;top:826.53px;font-size:14.5px;font-weight:normal;color:#111;">A04</div>
<div class="t" style="left:614px;top:826.53px;font-size:14.5px;font-weight:normal;color:#111;">TP-SSV</div>
<div class="t" style="left:719px;top:826.53px;font-size:14.5px;font-weight:normal;color:#111;">19.11.2024 09:26</div>
<div class="t" style="left:847px;top:826.53px;font-size:14.5px;font-weight:normal;color:#111;">237.4</div>
<div class="t" style="left:959px;top:826.53px;font-size:14.5px;font-weight:normal;color:#111;">ng/µl</div>
<div class="t" style="left:1017px;top:826.53px;font-size:14.5px;font-weight:normal;color:#111;">4.747</div>
<div class="t" style="left:1122px;top:826.53px;font-size:14.5px;font-weight:normal;color:#111;">2.480</div>
<div class="t" style="left:1227px;top:826.53px;font-size:14.5px;font-weight:normal;color:#111;">1.91</div>
<div class="t" style="left:1312px;top:826.53px;font-size:14.5px;font-weight:normal;color:#111;">2.32</div>
<div class="t" style="left:1397px;top:826.53px;font-size:14.5px;font-weight:normal;color:#111;">DNA</div>
<div class="t" style="left:1515px;top:826.53px;font-size:14.5px;font-weight:normal;color:#111;">50.00</div>
<div class="t" style="left:469.5px;top:847.53px;font-size:14.5px;font-weight:normal;color:#111;">6</div>
<div class="t" style="left:510px;top:847.53px;font-size:14.5px;font-weight:normal;color:#111;">A03</div>
<div class="t" style="left:614px;top:847.53px;font-size:14.5px;font-weight:normal;color:#111;">TP-SSV</div>
<div class="t" style="left:719px;top:847.53px;font-size:14.5px;font-weight:normal;color:#111;">19.11.2024 09:27</div>
<div class="t" style="left:847px;top:847.53px;font-size:14.5px;font-weight:normal;color:#111;">421.1</div>
<div class="t" style="left:959px;top:847.53px;font-size:14.5px;font-weight:normal;color:#111;">ng/µl</div>
<div class="t" style="left:1017px;top:847.53px;font-size:14.5px;font-weight:normal;color:#111;">8.423</div>
<div class="t" style="left:1122px;top:847.53px;font-size:14.5px;font-weight:normal;color:#111;">4.398</div>
<div class="t" style="left:1227px;top:847.53px;font-size:14.5px;font-weight:normal;color:#111;">1.92</div>
<div class="t" style="left:1312px;top:847.53px;font-size:14.5px;font-weight:normal;color:#111;">2.29</div>
<div class="t" style="left:1397px;top:847.53px;font-size:14.5px;font-weight:normal;color:#111;">DNA</div>
<div class="t" style="left:1515px;top:847.53px;font-size:14.5px;font-weight:normal;color:#111;">50.00</div>
<div class="t" style="left:469.5px;top:868.53px;font-size:14.5px;font-weight:normal;color:#111;">7</div>
<div class="t" style="left:510px;top:868.53px;font-size:14.5px;font-weight:normal;color:#111;">A14</div>
<div class="t" style="left:614px;top:868.53px;font-size:14.5px;font-weight:normal;color:#111;">TP-SSV</div>
<div class="t" style="left:719px;top:868.53px;font-size:14.5px;font-weight:normal;color:#111;">19.11.2024 09:31</div>
<div class="t" style="left:847px;top:868.53px;font-size:14.5px;font-weight:normal;color:#111;">156.1</div>
<div class="t" style="left:959px;top:868.53px;font-size:14.5px;font-weight:normal;color:#111;">ng/µl</div>
<div class="t" style="left:1017px;top:868.53px;font-size:14.5px;font-weight:normal;color:#111;">3.122</div>
<div class="t" style="left:1122px;top:868.53px;font-size:14.5px;font-weight:normal;color:#111;">1.610</div>
<div class="t" style="left:1227px;top:868.53px;font-size:14.5px;font-weight:normal;color:#111;">1.94</div>
<div class="t" style="left:1312px;top:868.53px;font-size:14.5px;font-weight:normal;color:#111;">2.32</div>
<div class="t" style="left:1397px;top:868.53px;font-size:14.5px;font-weight:normal;color:#111;">DNA</div>
<div class="t" style="left:1515px;top:868.53px;font-size:14.5px;font-weight:normal;color:#111;">50.00</div>
<div class="t" style="left:469.5px;top:889.53px;font-size:14.5px;font-weight:normal;color:#111;">8</div>
<div class="t" style="left:510px;top:889.53px;font-size:14.5px;font-weight:normal;color:#111;">A13</div>
<div class="t" style="left:614px;top:889.53px;font-size:14.5px;font-weight:normal;color:#111;">TP-SSV</div>
<div class="t" style="left:719px;top:889.53px;font-size:14.5px;font-weight:normal;color:#111;">19.11.2024 09:32</div>
<div class="t" style="left:847px;top:889.53px;font-size:14.5px;font-weight:normal;color:#111;">305.4</div>
<div class="t" style="left:959px;top:889.53px;font-size:14.5px;font-weight:normal;color:#111;">ng/µl</div>
<div class="t" style="left:1017px;top:889.53px;font-size:14.5px;font-weight:normal;color:#111;">6.108</div>
<div class="t" style="left:1122px;top:889.53px;font-size:14.5px;font-weight:normal;color:#111;">3.181</div>
<div class="t" style="left:1227px;top:889.53px;font-size:14.5px;font-weight:normal;color:#111;">1.92</div>
<div class="t" style="left:1312px;top:889.53px;font-size:14.5px;font-weight:normal;color:#111;">2.29</div>
<div class="t" style="left:1397px;top:889.53px;font-size:14.5px;font-weight:normal;color:#111;">DNA</div>
<div class="t" style="left:1515px;top:889.53px;font-size:14.5px;font-weight:normal;color:#111;">50.00</div>
<div class="t" style="left:469.5px;top:910.53px;font-size:14.5px;font-weight:normal;color:#111;">9</div>
<div class="t" style="left:510px;top:910.53px;font-size:14.5px;font-weight:normal;color:#111;">A09</div>
<div class="t" style="left:614px;top:910.53px;font-size:14.5px;font-weight:normal;color:#111;">TP-SSV</div>
<div class="t" style="left:719px;top:910.53px;font-size:14.5px;font-weight:normal;color:#111;">19.11.2024 09:36</div>
<div class="t" style="left:847px;top:910.53px;font-size:14.5px;font-weight:normal;color:#111;">389.1</div>
<div class="t" style="left:959px;top:910.53px;font-size:14.5px;font-weight:normal;color:#111;">ng/µl</div>
<div class="t" style="left:1017px;top:910.53px;font-size:14.5px;font-weight:normal;color:#111;">7.782</div>
<div class="t" style="left:1122px;top:910.53px;font-size:14.5px;font-weight:normal;color:#111;">4.057</div>
<div class="t" style="left:1227px;top:910.53px;font-size:14.5px;font-weight:normal;color:#111;">1.92</div>
<div class="t" style="left:1312px;top:910.53px;font-size:14.5px;font-weight:normal;color:#111;">2.28</div>
<div class="t" style="left:1397px;top:910.53px;font-size:14.5px;font-weight:normal;color:#111;">DNA</div>
<div class="t" style="left:1515px;top:910.53px;font-size:14.5px;font-weight:normal;color:#111;">50.00</div>
<div class="t" style="left:469.5px;top:931.53px;font-size:14.5px;font-weight:normal;color:#111;">10</div>
<div class="t" style="left:510px;top:931.53px;font-size:14.5px;font-weight:normal;color:#111;">A10</div>
<div class="t" style="left:614px;top:931.53px;font-size:14.5px;font-weight:normal;color:#111;">TP-SSV</div>
<div class="t" style="left:719px;top:931.53px;font-size:14.5px;font-weight:normal;color:#111;">19.11.2024 09:37</div>
<div class="t" style="left:847px;top:931.53px;font-size:14.5px;font-weight:normal;color:#111;">182.2</div>
<div class="t" style="left:959px;top:931.53px;font-size:14.5px;font-weight:normal;color:#111;">ng/µl</div>
<div class="t" style="left:1017px;top:931.53px;font-size:14.5px;font-weight:normal;color:#111;">3.645</div>
<div class="t" style="left:1122px;top:931.53px;font-size:14.5px;font-weight:normal;color:#111;">1.905</div>
<div class="t" style="left:1227px;top:931.53px;font-size:14.5px;font-weight:normal;color:#111;">1.91</div>
<div class="t" style="left:1312px;top:931.53px;font-size:14.5px;font-weight:normal;color:#111;">2.12</div>
<div class="t" style="left:1397px;top:931.53px;font-size:14.5px;font-weight:normal;color:#111;">DNA</div>
<div class="t" style="left:1515px;top:931.53px;font-size:14.5px;font-weight:normal;color:#111;">50.00</div>
<div class="t" style="left:469.5px;top:952.53px;font-size:14.5px;font-weight:normal;color:#111;">11</div>
<div class="t" style="left:510px;top:952.53px;font-size:14.5px;font-weight:normal;color:#111;">A05&nbsp; sample A</div>
<div class="t" style="left:614px;top:952.53px;font-size:14.5px;font-weight:normal;color:#111;">TP-SSV</div>
<div class="t" style="left:719px;top:952.53px;font-size:14.5px;font-weight:normal;color:#111;">19.11.2024 09:41</div>
<div class="t" style="left:847px;top:952.53px;font-size:14.5px;font-weight:normal;color:#111;">171.1</div>
<div class="t" style="left:959px;top:952.53px;font-size:14.5px;font-weight:normal;color:#111;">ng/µl</div>
<div class="t" style="left:1017px;top:952.53px;font-size:14.5px;font-weight:normal;color:#111;">3.421</div>
<div class="t" style="left:1122px;top:952.53px;font-size:14.5px;font-weight:normal;color:#111;">1.777</div>
<div class="t" style="left:1227px;top:952.53px;font-size:14.5px;font-weight:normal;color:#111;">1.93</div>
<div class="t" style="left:1312px;top:952.53px;font-size:14.5px;font-weight:normal;color:#111;">2.33</div>
<div class="t" style="left:1397px;top:952.53px;font-size:14.5px;font-weight:normal;color:#111;">DNA</div>
<div class="t" style="left:1515px;top:952.53px;font-size:14.5px;font-weight:normal;color:#111;">50.00</div>
<div style="position:absolute;left:466px;top:969px;width:1121px;height:21px;background:#0078d7"></div>
<div class="t" style="left:469.5px;top:973.53px;font-size:14.5px;font-weight:normal;color:#fff;">12</div>
<div class="t" style="left:510px;top:973.53px;font-size:14.5px;font-weight:normal;color:#fff;">A06&nbsp; sample B</div>
<div class="t" style="left:614px;top:973.53px;font-size:14.5px;font-weight:normal;color:#fff;">TP-SSV</div>
<div class="t" style="left:719px;top:973.53px;font-size:14.5px;font-weight:normal;color:#fff;">19.11.2024 09:43</div>
<div class="t" style="left:847px;top:973.53px;font-size:14.5px;font-weight:normal;color:#fff;">306.4</div>
<div class="t" style="left:959px;top:973.53px;font-size:14.5px;font-weight:normal;color:#fff;">ng/µl</div>
<div class="t" style="left:1017px;top:973.53px;font-size:14.5px;font-weight:normal;color:#fff;">6.129</div>
<div class="t" style="left:1122px;top:973.53px;font-size:14.5px;font-weight:normal;color:#fff;">3.191</div>
<div class="t" style="left:1227px;top:973.53px;font-size:14.5px;font-weight:normal;color:#fff;">1.92</div>
<div class="t" style="left:1312px;top:973.53px;font-size:14.5px;font-weight:normal;color:#fff;">2.30</div>
<div class="t" style="left:1397px;top:973.53px;font-size:14.5px;font-weight:normal;color:#fff;">DNA</div>
<div class="t" style="left:1515px;top:973.53px;font-size:14.5px;font-weight:normal;color:#fff;">50.00</div>
<div style="position:absolute;left:466px;top:801px;width:1121px;height:1px;background:#a0a0a0"></div>
<div style="position:absolute;left:466px;top:822px;width:1121px;height:1px;background:#a0a0a0"></div>
<div style="position:absolute;left:466px;top:843px;width:1121px;height:1px;background:#a0a0a0"></div>
<div style="position:absolute;left:466px;top:864px;width:1121px;height:1px;background:#a0a0a0"></div>
<div style="position:absolute;left:466px;top:885px;width:1121px;height:1px;background:#a0a0a0"></div>
<div style="position:absolute;left:466px;top:906px;width:1121px;height:1px;background:#a0a0a0"></div>
<div style="position:absolute;left:466px;top:927px;width:1121px;height:1px;background:#a0a0a0"></div>
<div style="position:absolute;left:466px;top:948px;width:1121px;height:1px;background:#a0a0a0"></div>
<div style="position:absolute;left:466px;top:969px;width:1121px;height:1px;background:#a0a0a0"></div>
<div style="position:absolute;left:466px;top:990px;width:1121px;height:1px;background:#a0a0a0"></div>
<div style="position:absolute;left:506px;top:801px;width:1px;height:189px;background:#a0a0a0"></div>
<div style="position:absolute;left:610px;top:801px;width:1px;height:189px;background:#a0a0a0"></div>
<div style="position:absolute;left:715px;top:801px;width:1px;height:189px;background:#a0a0a0"></div>
<div style="position:absolute;left:843px;top:801px;width:1px;height:189px;background:#a0a0a0"></div>
<div style="position:absolute;left:955px;top:801px;width:1px;height:189px;background:#a0a0a0"></div>
<div style="position:absolute;left:1013px;top:801px;width:1px;height:189px;background:#a0a0a0"></div>
<div style="position:absolute;left:1118px;top:801px;width:1px;height:189px;background:#a0a0a0"></div>
<div style="position:absolute;left:1223px;top:801px;width:1px;height:189px;background:#a0a0a0"></div>
<div style="position:absolute;left:1308px;top:801px;width:1px;height:189px;background:#a0a0a0"></div>
<div style="position:absolute;left:1393px;top:801px;width:1px;height:189px;background:#a0a0a0"></div>
<div style="position:absolute;left:1511px;top:801px;width:1px;height:189px;background:#a0a0a0"></div>
<div style="position:absolute;left:1586px;top:801px;width:1px;height:189px;background:#a0a0a0"></div>
<div style="position:absolute;left:1899px;top:778px;width:1px;height:224px;background:#fbfbfd"></div>
<div style="position:absolute;left:1900px;top:778px;width:15px;height:224px;background:#f0f0f0"></div>
<div style="position:absolute;left:1907px;top:833px;width:2px;height:153px;background:#888"></div>
<svg style="position:absolute;left:14px;top:1040px" width="90" height="34" viewBox="0 0 1920 725">
<defs><linearGradient id="cl" x1="0" y1="0" x2="0" y2="1"><stop offset="0" stop-color="#8eaaea"/><stop offset="1" stop-color="#dde6fa"/></linearGradient>
<linearGradient id="dr" x1="0" y1="0" x2="1" y2="1"><stop offset="0" stop-color="#60a8f8"/><stop offset="1" stop-color="#0a5ee8"/></linearGradient></defs>
<path d="M165 442 Q108 432 110 345 Q118 268 205 262 Q245 135 380 130 Q462 138 482 212 Q602 215 612 312 Q610 425 540 442 Z" fill="url(#cl)" stroke="#8aa2da" stroke-width="14"/>
<path d="M385 338 L520 468 Q545 572 458 578 Q382 572 385 498 Z" fill="url(#dr)"/>
</svg>
<div class="t" style="left:50.8px;top:1042.98px;font-size:11.25px;font-weight:normal;color:#1a1a1a;">6°C</div>
<div class="t" style="left:50.8px;top:1057.53px;font-size:12.25px;font-weight:normal;color:#505050;">Light rain</div>
<svg style="position:absolute;left:704px;top:1045px;" width="24" height="23" viewBox="0 0 24 23"><defs><linearGradient id="wl" x1="0" y1="0" x2="1" y2="1"><stop offset="0" stop-color="#3cc0f8"/><stop offset="1" stop-color="#0a78d8"/></linearGradient></defs>
<rect x="0.5" y="0" width="10.8" height="10.8" fill="url(#wl)"/><rect x="12.7" y="0" width="10.8" height="10.8" fill="url(#wl)"/>
<rect x="0.5" y="12.2" width="10.8" height="10.8" fill="url(#wl)"/><rect x="12.7" y="12.2" width="10.8" height="10.8" fill="url(#wl)"/></svg>
<div style="position:absolute;left:741.5px;top:1040.5px;width:219px;height:31px;background:#f4f7fd;border:1px solid #cdd6e4;border-radius:16px;box-sizing:border-box"></div>
<svg style="position:absolute;left:752px;top:1048px;" width="16" height="16" viewBox="0 0 16 16"><circle cx="6.8" cy="6.8" r="5.2" fill="none" stroke="#222" stroke-width="1.6"/><path d="M10.6 10.6 L14.5 14.5" stroke="#222" stroke-width="1.8" stroke-linecap="round"/></svg>
<div class="t" style="left:778.3px;top:1050.20px;font-size:13px;font-weight:normal;color:#5a5a5a;">Search</div>
<svg style="position:absolute;left:690px;top:1032px" width="320" height="48" viewBox="0 0 1920 288">
<defs><linearGradient id="mn" x1="0" y1="0" x2="0" y2="1"><stop offset="0" stop-color="#b4aec4"/><stop offset="1" stop-color="#6e687e"/></linearGradient></defs>
<path d="M1332 222 Q1325 180 1345 140 Q1360 165 1372 150 Q1380 190 1365 222 Z" fill="#9cc83a"/>
<path d="M1368 128 Q1380 92 1420 84 Q1490 76 1530 120 Q1555 150 1575 168 Q1590 190 1568 200 Q1545 205 1530 188 Q1480 190 1445 184 Q1430 200 1405 195 Q1395 180 1410 172 Q1385 165 1372 150 Q1362 140 1368 128 Z" fill="url(#mn)"/>
<circle cx="1393" cy="112" r="5" fill="#333"/>
</svg>
<svg style="position:absolute;left:972px;top:1044px;" width="26" height="24" viewBox="0 0 26 24"><rect x="9.5" y="1" width="14" height="13.5" rx="1" fill="#f4f4f4" stroke="#d8d8d8" stroke-width="0.6"/>
<rect x="1.5" y="7" width="15" height="15" rx="1" fill="#1c1c1c"/>
<rect x="9.5" y="7" width="7" height="7.5" fill="#bdbdbd"/></svg>
<svg style="position:absolute;left:1056px;top:1040px" width="34" height="32" viewBox="0 0 1394 1312">
<defs><linearGradient id="eg1" x1="0" y1="0" x2="1" y2="0.5"><stop offset="0" stop-color="#34c4f8"/><stop offset="0.5" stop-color="#2cc4b8"/><stop offset="1" stop-color="#64e060"/></linearGradient>
<linearGradient id="eg2" x1="0" y1="0" x2="0.4" y2="1"><stop offset="0" stop-color="#1e90f0"/><stop offset="0.6" stop-color="#0c62c0"/><stop offset="1" stop-color="#0a4a98"/></linearGradient></defs>
<path d="M210 580 Q220 300 500 190 Q800 110 1060 300 Q1200 440 1185 640 Q1160 810 960 825 Q800 820 770 700 Q780 600 700 540 Q560 420 350 430 Q250 450 210 580 Z" fill="url(#eg1)"/>
<path d="M205 600 Q240 430 440 420 Q650 420 760 560 Q600 520 580 650 Q580 800 740 880 Q860 930 1000 915 Q1070 905 1110 895 Q1000 1100 740 1140 Q450 1170 280 960 Q190 820 205 600 Z" fill="url(#eg2)"/>
<circle cx="690" cy="655" r="105" fill="#dfe7f5"/>
</svg>
<svg style="position:absolute;left:1104px;top:1044px;" width="25" height="23" viewBox="0 0 25 23"><path d="M0.5 3 Q0.5 1 2.5 1 L8 1 L10.5 3.5 L22.5 3.5 Q24.5 3.5 24.5 5.5 L24.5 7 L0.5 7 Z" fill="#e8a81a"/>
<rect x="0.5" y="5" width="24" height="17" rx="1.5" fill="#fcd35a"/>
<rect x="5" y="15" width="15" height="7.5" rx="1.2" fill="#1878d0"/></svg>
<div style="position:absolute;left:1113px;top:1072px;width:8px;height:3px;background:#70757c;border-radius:2px"></div>
<div style="position:absolute;left:1142px;top:1037px;width:38px;height:38px;background:#eef2fa;border:1px solid #e0e6f0;border-radius:4px;box-sizing:border-box"></div>
<svg style="position:absolute;left:1145px;top:1040px" width="75" height="32" viewBox="0 0 1920 819">
<defs><linearGradient id="ap" x1="0" y1="0" x2="1" y2="0"><stop offset="0" stop-color="#e4eaf6"/><stop offset="0.4" stop-color="#a8b8e0"/><stop offset="1" stop-color="#7890d0"/></linearGradient>
<linearGradient id="pt" x1="0" y1="0" x2="0.6" y2="1"><stop offset="0" stop-color="#58ccf8"/><stop offset="1" stop-color="#1888e0"/></linearGradient></defs>
<rect x="105" y="100" width="610" height="610" fill="url(#ap)" stroke="#5a70b8" stroke-width="14"/>
<path d="M160 185 Q160 130 225 130 L600 130 Q660 130 660 185 Q660 235 600 262 L240 272 Q160 262 160 205 Z" fill="#050508"/>
<path d="M130 560 Q140 510 250 510 L570 510 Q660 520 660 585 Q660 655 600 662 L185 662 Q130 652 130 605 Z" fill="#050508"/>
<path d="M262 290 L522 290 Q462 390 532 490 L262 490 Q322 390 262 290 Z" fill="#3a4aa2"/>
<ellipse cx="398" cy="402" rx="62" ry="34" fill="#c8d4f8"/>
<path d="M1255 470 Q1250 250 1450 160 Q1650 100 1780 230 Q1830 320 1800 450 Q1780 540 1700 560 Q1640 565 1640 625 Q1620 700 1520 690 Q1460 680 1460 600 Q1460 520 1400 545 Q1340 600 1290 580 Q1250 540 1255 470 Z" fill="url(#pt)"/>
<circle cx="1345" cy="420" r="45" fill="#d84a28"/><circle cx="1415" cy="290" r="47" fill="#2a9a34"/><circle cx="1552" cy="238" r="45" fill="#f0d020"/>
<path d="M1545 400 L1565 430 L1595 445 L1565 460 L1545 490 L1525 460 L1495 445 L1525 430 Z" fill="#e8f8ff"/>
<rect x="1668" y="360" width="70" height="350" rx="20" fill="#a8702a"/>
<path d="M1645 315 L1760 315 L1745 385 L1662 385 Z" fill="#f0e4c8"/>
</svg>
<div style="position:absolute;left:1153px;top:1072px;width:16px;height:3px;background:#0a64c8;border-radius:2px"></div>
<div style="position:absolute;left:1201px;top:1072px;width:8px;height:3px;background:#70757c;border-radius:2px"></div>
<svg style="position:absolute;left:1689px;top:1052px;" width="12" height="8" viewBox="0 0 12 8"><path d="M1 6.5 L6 1.5 L11 6.5" fill="none" stroke="#222" stroke-width="1.3"/></svg>
<div class="t" style="left:1721.7px;top:1051.69px;font-size:11px;font-weight:normal;color:#222;">ENG</div>
<svg style="position:absolute;left:1762px;top:1047px;" width="19" height="18" viewBox="0 0 19 18"><rect x="0.7" y="1.7" width="13" height="10.5" rx="1" fill="none" stroke="#222" stroke-width="1.1"/>
<path d="M5 15.5 H10 M7.5 12.5 V15.5" stroke="#222" stroke-width="1.1"/>
<rect x="13" y="0.7" width="3.5" height="5" rx="1.5" fill="#e0e8f4" stroke="#222" stroke-width="1"/><path d="M14.7 5.7 V16.5" stroke="#222" stroke-width="1.1"/></svg>
<svg style="position:absolute;left:1786px;top:1048px;" width="18" height="16" viewBox="0 0 18 16"><path d="M1 5.5 H4 L8 2 V14 L4 10.5 H1 Z" fill="none" stroke="#222" stroke-width="1.1"/>
<path d="M10.5 5.5 Q12 8 10.5 10.5 M12.8 3.5 Q15.5 8 12.8 12.5 M15 1.5 Q19 8 15 14.5" fill="none" stroke="#222" stroke-width="1.1"/></svg>
<div class="t" style="right:43.5px;top:1043.27px;font-size:11.5px;font-weight:normal;color:#222;">09:43</div>
<div class="t" style="right:43.5px;top:1059.27px;font-size:11.5px;font-weight:normal;color:#222;">19.11.2024</div>
<svg style="position:absolute;left:1885px;top:1048px;" width="15" height="17" viewBox="0 0 15 17"><path d="M7.5 1 Q12.5 1 12.5 7 L12.5 11 L14.3 13.2 L0.7 13.2 L2.5 11 L2.5 7 Q2.5 1 7.5 1 Z" fill="#0a50c8"/>
<path d="M5.3 14.3 Q7.5 17 9.7 14.3 Z" fill="#0a50c8"/></svg>
<svg style="position:absolute;left:6px;top:788px" width="36" height="62" viewBox="0 0 762 1312">
<defs>
<linearGradient id="roof" x1="0" y1="0" x2="1" y2="1"><stop offset="0" stop-color="#f4b850"/><stop offset="1" stop-color="#c06810"/></linearGradient>
<linearGradient id="wallb" x1="0" y1="0" x2="1" y2="0"><stop offset="0" stop-color="#3a88c8"/><stop offset="1" stop-color="#74b4e4"/></linearGradient>
<linearGradient id="tbody" x1="0" y1="0" x2="1" y2="1"><stop offset="0" stop-color="#fafafa"/><stop offset="0.6" stop-color="#d8d8d8"/><stop offset="1" stop-color="#9a9a9a"/></linearGradient>
</defs>
<path d="M70 370 L160 340 L360 470 L290 515 Z" fill="#1a5a80"/>
<path d="M160 150 L340 230 L360 470 L165 385 Z" fill="url(#wallb)"/>
<path d="M225 250 L285 270 L285 340 L228 320 Z" fill="#155a88"/>
<path d="M340 230 L660 190 L650 410 L360 470 Z" fill="#fafafa" stroke="#b8cce0" stroke-width="10"/>
<path d="M470 285 L540 270 L545 430 L475 445 Z" fill="#15558a"/>
<path d="M130 150 L235 100 L235 55 L300 50 L310 80 L560 62 L672 180 L340 242 Z" fill="url(#roof)" stroke="#8a4a10" stroke-width="8"/>
<path d="M70 1020 Q80 1090 180 1112 L300 1102 L280 1060 Z" fill="#111"/>
<path d="M90 780 Q100 700 210 700 L330 700 Q410 710 410 800 L410 1000 Q400 1085 300 1092 L200 1092 Q90 1082 90 990 Z" fill="url(#tbody)" stroke="#8a8a8a" stroke-width="10"/>
<ellipse cx="192" cy="885" rx="78" ry="150" fill="#fdfdfd" stroke="#b4b4b4" stroke-width="26"/>
<path d="M305 815 L392 800 L396 1000 L308 1022 Z" fill="#e8c040"/>
<path d="M290 1050 L640 1125 L662 1180 L560 1200 L282 1108 Z" fill="#f0d048" stroke="#c8a830" stroke-width="6"/>
<path d="M548 1165 L660 1150 L668 1212 L560 1232 Z" fill="#e4e4e4" stroke="#a0a0a0" stroke-width="6"/>
</svg>
<svg style="position:absolute;left:4px;top:786px" width="40" height="96" viewBox="0 0 547 1312">
<defs><linearGradient id="red" x1="0" y1="0" x2="1" y2="1"><stop offset="0" stop-color="#f05a6a"/><stop offset="1" stop-color="#d8283a"/></linearGradient></defs>
<rect x="150" y="930" width="210" height="250" rx="12" fill="url(#red)" stroke="#a01828" stroke-width="6"/>
<rect x="230" y="990" width="212" height="258" rx="12" fill="url(#red)" stroke="#a01828" stroke-width="6"/>
<rect x="288" y="1048" width="85" height="52" rx="8" fill="#fff" stroke="#a01828" stroke-width="5"/>
<g stroke="#222" stroke-width="14">
<path d="M125 975 H175 M125 1015 H175 M125 1055 H175 M125 1095 H175 M125 1135 H175"/>
<path d="M205 1030 H255 M205 1070 H255 M205 1110 H255 M205 1150 H255 M205 1190 H255 M205 1225 H255"/>
</g>
</svg>
<svg style="position:absolute;left:4px;top:882px" width="40" height="96" viewBox="0 0 547 1312">
<defs>
<linearGradient id="cab" x1="0" y1="0" x2="1" y2="0"><stop offset="0" stop-color="#7a8aa0"/><stop offset="1" stop-color="#c0c8d8"/></linearGradient>
<linearGradient id="calc" x1="0" y1="0" x2="1" y2="1"><stop offset="0" stop-color="#8ac0f0"/><stop offset="1" stop-color="#3a78c0"/></linearGradient>
<radialGradient id="ball" cx="40%" cy="35%" r="60%"><stop offset="0" stop-color="#f0f8ff"/><stop offset="1" stop-color="#7aa8d0"/></radialGradient>
<radialGradient id="gball" cx="40%" cy="35%" r="60%"><stop offset="0" stop-color="#c8f0c0"/><stop offset="1" stop-color="#209030"/></radialGradient>
</defs>
<path d="M100 320 L160 310 L240 380 L180 380 Z" fill="#222"/>
<path d="M150 50 L400 45 L420 70 L440 220 L445 375 L180 375 L150 330 Z" fill="url(#cab)" stroke="#5a6a80" stroke-width="6"/>
<rect x="190" y="70" width="225" height="120" fill="#c8d0e0" stroke="#7080a0" stroke-width="5"/>
<rect x="275" y="100" width="60" height="25" fill="#fff"/>
<path d="M240 150 L300 135 L400 160 L415 210 L245 220 Z" fill="#f8d860" stroke="#c8a030" stroke-width="5"/>
<rect x="215" y="210" width="230" height="160" fill="#b8c4d8" stroke="#6a7a98" stroke-width="5"/>
<rect x="300" y="268" width="60" height="25" fill="#fff"/>
<rect x="310" y="310" width="40" height="20" fill="#8a98b0"/>
<g fill="none" stroke="#e8701e" stroke-width="44" stroke-linecap="round">
<path d="M330 470 Q440 560 360 650 Q300 730 440 830"/>
<path d="M450 470 Q360 560 430 650 Q480 730 330 830"/>
</g>
<g stroke="#1e4a8a" stroke-width="22"><path d="M350 500 H440 M380 640 H420 M350 800 H440"/></g>
<path d="M70 570 L300 470 L420 720 L200 825 Z" fill="url(#calc)" stroke="#1e4a8a" stroke-width="10"/>
<path d="M120 560 L255 505 L280 560 L145 615 Z" fill="#e8f4ff" stroke="#3a6aa8" stroke-width="5"/>
<g fill="#f0f8ff"><path d="M165 650 L330 585 L380 700 L215 765 Z"/></g>
<g stroke="#5a90c8" stroke-width="8"><path d="M190 705 L350 640 M205 735 L365 670 M180 680 L340 615"/><path d="M210 640 L255 750 M255 622 L300 732 M300 605 L345 715"/></g>
<rect x="115" y="980" width="245" height="210" fill="#d8e8f8" stroke="#3a5a88" stroke-width="8"/>
<circle cx="195" cy="965" r="45" fill="url(#ball)" stroke="#4a6a98" stroke-width="6"/>
<circle cx="190" cy="1085" r="50" fill="url(#gball)" stroke="#2a6a3a" stroke-width="6"/>
<circle cx="195" cy="1225" r="45" fill="url(#ball)" stroke="#4a6a98" stroke-width="6"/>
<path d="M215 1050 L275 1020 L300 1075 Q360 990 460 960 L440 1010 Q380 1030 290 1135 Z" fill="#e01818" stroke="#901010" stroke-width="5"/>
</svg>
</body></html>
